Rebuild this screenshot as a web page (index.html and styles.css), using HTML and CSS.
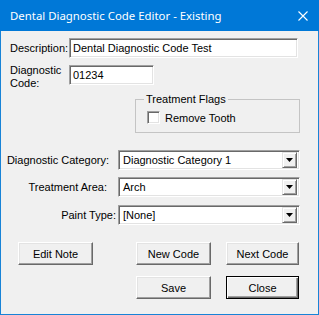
FILE: index.html
```html
<!DOCTYPE html>
<html lang="en">
<head>
  <meta charset="UTF-8" />
  <title>Dental Diagnostic Code Editor - Existing</title>
  <link rel="stylesheet" href="styles.css">
</head>
<body>
  <div class="window">
    <div class="titlebar">
      <span class="title">Dental Diagnostic Code Editor - Existing</span>
      <svg class="close-x" width="10" height="10" viewBox="0 0 10 10">
        <path d="M0.5 0.5 L9.5 9.5 M9.5 0.5 L0.5 9.5" stroke="#fff" stroke-width="1.1" fill="none" />
      </svg>
    </div>

    <div class="content">
      <div class="row">
        <label class="lbl-desc">Description:</label>
        <input class="field field-desc" type="text" value="Dental Diagnostic Code Test" />
      </div>

      <div class="row row-code">
        <label class="lbl-code">Diagnostic<br />Code:</label>
        <input class="field field-code" type="text" value="01234" />
      </div>

      <div class="group">
        <span class="group-title">Treatment Flags</span>
        <div class="check-row">
          <span class="checkbox"></span>
          <span class="check-text">Remove Tooth</span>
        </div>
      </div>

      <div class="combo-row first">
        <label class="combo-lbl lbl-cat">Diagnostic Category:</label>
        <div class="combo">
          <span class="combo-text">Diagnostic Category 1</span>
          <span class="combo-btn"><svg width="7" height="4" viewBox="0 0 7 4"><polygon points="0,0 7,0 3.5,4" fill="#000" /></svg></span>
        </div>
      </div>

      <div class="combo-row">
        <label class="combo-lbl lbl-area">Treatment Area:</label>
        <div class="combo">
          <span class="combo-text">Arch</span>
          <span class="combo-btn"><svg width="7" height="4" viewBox="0 0 7 4"><polygon points="0,0 7,0 3.5,4" fill="#000" /></svg></span>
        </div>
      </div>

      <div class="combo-row last">
        <label class="combo-lbl lbl-paint">Paint Type:</label>
        <div class="combo">
          <span class="combo-text">[None]</span>
          <span class="combo-btn"><svg width="7" height="4" viewBox="0 0 7 4"><polygon points="0,0 7,0 3.5,4" fill="#000" /></svg></span>
        </div>
      </div>

      <div class="btn-row">
        <button class="btn btn-edit">Edit Note</button>
        <button class="btn btn-new">New Code</button>
        <button class="btn btn-next">Next Code</button>
      </div>

      <div class="btn-row second">
        <button class="btn btn-save">Save</button>
        <button class="btn btn-close">Close</button>
      </div>
    </div>
  </div>
</body>
</html>
```

FILE: styles.css
```css
body {
  margin: 0;
  font-family: 'Liberation Sans', Arial, sans-serif;
  font-size: 11px;
  color: #000;
}

.window {
  width: 319px;
  height: 315px;
  display: flex;
  flex-direction: column;
  background: #f0f0f0;
}

.titlebar {
  height: 31px;
  flex-shrink: 0;
  background: #0078d7;
  color: #fff;
  display: flex;
  align-items: center;
  padding-left: 10px;
  font-family: 'Noto Sans', sans-serif;
  font-size: 11.4px;
}

.title {
  flex: 1;
}

.close-x {
  margin-right: 11px;
}

.content {
  flex: 1;
  border: 1px solid #1883d7;
  border-top: none;
  padding: 7px 0 0 9px;
}

/* sunken 3d edit box */
.field,
.combo,
.checkbox {
  box-sizing: border-box;
  background: #fff;
  border: 1px solid;
  border-color: #a0a0a0 #fff #fff #a0a0a0;
  box-shadow: inset 1px 1px 0 #696969, inset -1px -1px 0 #e3e3e3;
}

.row {
  display: flex;
  height: 20px;
}

.row label {
  width: 59px;
  line-height: 20px;
}

.field {
  height: 20px;
  margin: 0;
  padding: 0 0 0 3px;
  font-family: inherit;
  font-size: 11px;
  outline: none;
}

.field-desc {
  width: 229px;
}

.field-code {
  width: 85px;
}

.row-code {
  margin-top: 7px;
}

.row-code .lbl-code {
  line-height: 13px;
  margin-top: -1px;
}

.group {
  position: relative;
  box-sizing: border-box;
  width: 165px;
  height: 34px;
  margin: 14px 0 0 125px;
  border: 1px solid #c4c4c4;
}

.group-title {
  position: absolute;
  top: -7px;
  left: 8px;
  padding: 0 2px;
  line-height: 13px;
  background: #f0f0f0;
}

.check-row {
  display: flex;
  align-items: center;
  padding: 11px 0 0 11px;
}

.checkbox {
  width: 13px;
  height: 13px;
}

.check-text {
  margin-left: 5px;
}

.combo-row {
  display: flex;
  height: 20px;
  margin-top: 7px;
}

.combo-row.first {
  margin-top: 17px;
}

.combo-row.last {
  margin-top: 8px;
}

.combo-lbl {
  width: 108px;
  flex-shrink: 0;
  box-sizing: border-box;
  display: flex;
  justify-content: flex-end;
  align-items: center;
  white-space: nowrap;
}

.lbl-cat {
  padding-right: 9px;
}

.lbl-area {
  padding-right: 11px;
}

.lbl-paint {
  padding-right: 2px;
}

.combo {
  width: 182px;
  height: 20px;
  display: flex;
  align-items: center;
  padding: 2px;
}

.combo-text {
  flex: 1;
  padding-left: 2px;
}

.combo-btn {
  box-sizing: border-box;
  width: 15px;
  height: 16px;
  display: flex;
  align-items: center;
  justify-content: center;
  background: #f0f0f0;
  border: 1px solid;
  border-color: #e3e3e3 #696969 #696969 #e3e3e3;
  box-shadow: inset 1px 1px 0 #fff, inset -1px -1px 0 #a0a0a0;
}

.btn-row {
  display: flex;
  margin-top: 17px;
}

.btn-row.second {
  margin-top: 11px;
}

.btn {
  box-sizing: border-box;
  width: 75px;
  height: 23px;
  margin: 0;
  padding: 0;
  font-family: inherit;
  font-size: 11px;
  color: #000;
  background: #f0f0f0;
  border: 1px solid;
  border-color: #fff #696969 #696969 #fff;
  box-shadow: inset -1px -1px 0 #a0a0a0, inset 1px 1px 0 #e3e3e3;
}

.btn-edit {
  margin-left: 8px;
}

.btn-new {
  margin-left: 43px;
}

.btn-next {
  width: 73px;
  margin-left: 15px;
}

.btn-save {
  margin-left: 126px;
}

.btn-close {
  width: 73px;
  margin-left: 15px;
  border-color: #000;
  box-shadow: inset 1px 1px 0 #fff, inset -1px -1px 0 #696969, inset -2px -2px 0 #a0a0a0;
}
```
